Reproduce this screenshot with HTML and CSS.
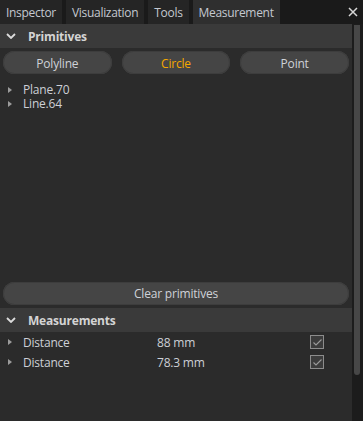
FILE: index.html
```html
<!DOCTYPE html>
<html>
<head>
<meta charset="utf-8">
<link rel="stylesheet" href="styles.css">
</head>
<body>
<div class="tabbar">
  <div class="tab">Inspector</div>
  <div class="tab">Visualization</div>
  <div class="tab">Tools</div>
  <div class="tab active">Measurement</div>
  <div class="close"><svg width="10" height="10" viewBox="0 0 10 10"><path d="M1 1L9 9M9 1L1 9" stroke="#d8d8d8" stroke-width="1.5"/></svg></div>
</div>
<div class="main">
  <div class="content">
    <div class="sechead">
      <svg class="chev" width="10" height="6" viewBox="0 0 10 6"><path d="M1 1L5 5L9 1" fill="none" stroke="#dcdcdc" stroke-width="1.8"/></svg>
      <span>Primitives</span>
    </div>
    <div class="btnrow">
      <div class="btn">Polyline</div>
      <div class="btn sel">Circle</div>
      <div class="btn">Point</div>
    </div>
    <div class="list">
      <div class="item"><span class="tri"></span>Plane.70</div>
      <div class="item"><span class="tri"></span>Line.64</div>
    </div>
    <div class="spacer"></div>
    <div class="btn wide">Clear primitives</div>
    <div class="sechead meas">
      <svg class="chev" width="10" height="6" viewBox="0 0 10 6"><path d="M1 1L5 5L9 1" fill="none" stroke="#dcdcdc" stroke-width="1.8"/></svg>
      <span>Measurements</span>
    </div>
    <div class="mrows">
      <div class="mrow"><span class="tri"></span><span class="lbl">Distance</span><span class="val">88 mm</span><span class="chk"><svg width="9" height="7" viewBox="0 0 9 7"><path d="M0.5 3.5L3 6L8.5 0.5" fill="none" stroke="#9a9a9a" stroke-width="1.1"/></svg></span></div>
      <div class="mrow"><span class="tri"></span><span class="lbl">Distance</span><span class="val">78.3 mm</span><span class="chk"><svg width="9" height="7" viewBox="0 0 9 7"><path d="M0.5 3.5L3 6L8.5 0.5" fill="none" stroke="#9a9a9a" stroke-width="1.1"/></svg></span></div>
    </div>
    <div class="rest"></div>
  </div>
  <div class="scroll"><div class="thumb"></div></div>
</div>
</body>
</html>
```
FILE: styles.css
```css
html, body {
  margin: 0;
  padding: 0;
  width: 363px;
  height: 421px;
  overflow: hidden;
  background: #1c1c1c;
  font-family: "Open Sans", "Noto Sans", sans-serif;
  font-size: 12px;
  color: #cfcfcf;
}
.tabbar {
  height: 24px;
  display: flex;
  gap: 4px;
  background: #1a1a1a;
}
.tab {
  background: #252525;
  padding: 1px 6px 0 6px;
  height: 23px;
  line-height: 24px;
  color: #c4c8d0;
  letter-spacing: -0.3px;
}
.tab.active {
  background: #2f2f2f;
}
.close {
  margin-left: auto;
  width: 22px;
  display: flex;
  align-items: center;
  justify-content: center;
  margin-right: -1px;
}
.main {
  display: flex;
  height: 397px;
}
.content {
  flex: 1;
  display: flex;
  flex-direction: column;
  background: #2b2b2b;
}
.scroll {
  width: 9px;
  margin-left: 1px;
  background: #1c1c1c;
  padding-left: 1px;
}
.thumb {
  width: 6px;
  height: 350px;
  margin-top: 1px;
  background: #474747;
  border-radius: 0 0 3px 3px;
}
.sechead {
  height: 24px;
  background: #3a3a3a;
  display: flex;
  align-items: center;
  font-weight: bold;
  color: #d4d4d4;
  letter-spacing: -0.2px;
}
.sechead span {
  padding-top: 1px;
}
.chev {
  margin-left: 6px;
  margin-right: 12px;
}
.btnrow {
  display: grid;
  grid-template-columns: 1fr 1fr 1fr;
  gap: 10px;
  padding: 3px 3px 0 3px;
}
.btn {
  height: 23px;
  line-height: 25px;
  border-radius: 12px;
  background: #454545;
  text-align: center;
  color: #cfd2d8;
  box-shadow: inset 0 0 0 1px #3d3d3d;
  letter-spacing: -0.2px;
}
.btn.sel {
  color: #f5a800;
}
.btn.wide {
  margin: 0 3px;
  line-height: 24px;
}
.list {
  padding-top: 9px;
}
.item {
  height: 14px;
  line-height: 14px;
  display: flex;
  align-items: center;
  color: #cdd0d6;
  letter-spacing: -0.2px;
}
.tri {
  width: 0;
  height: 0;
  border-top: 3.5px solid transparent;
  border-bottom: 3.5px solid transparent;
  border-left: 4px solid #9c9c9c;
  margin-left: 8px;
  margin-right: 11px;
}
.spacer {
  flex: 1;
}
.meas {
  margin-top: 3px;
}
.mrows {
  background: #2b2b2b;
}
.mrow {
  height: 20px;
  display: flex;
  align-items: center;
  color: #cdd0d6;
  letter-spacing: -0.2px;
}
.lbl {
  width: 134px;
}
.val {
  width: 153px;
}
.chk {
  width: 12px;
  height: 12px;
  border: 1px solid #8c8c8c;
  background: #3c3c3c;
  display: flex;
  align-items: center;
  justify-content: center;
}
.rest {
  height: 49px;
}
```
